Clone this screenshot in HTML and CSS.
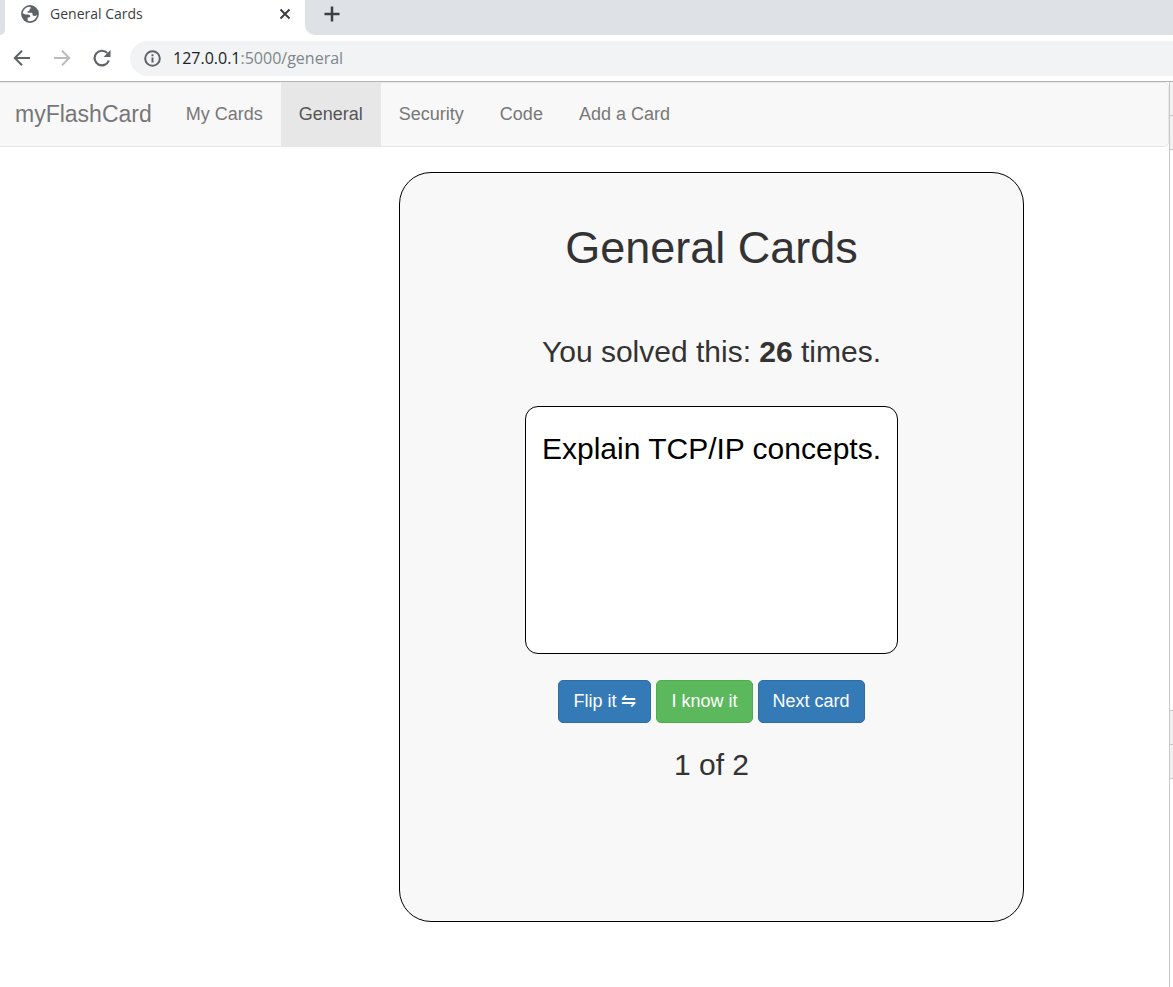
FILE: index.html
```html
<!DOCTYPE html>
<html lang="en">
<head>
<meta charset="utf-8">
<title>General Cards</title>
<link rel="stylesheet" href="styles.css">
</head>
<body>
<header class="browser">
  <div class="tabstrip">
    <div class="tab-edge"></div>
    <div class="tab">
      <svg class="globe" width="18" height="18" viewBox="0 0 18 18" aria-hidden="true"><circle cx="9" cy="9" r="8.9" fill="#5f6368"/><path d="M8.5 1.8C5 2 2.2 4.700 1.800 8.200L4.200 9.500H7.200C8.600 9.500 9.200 10.300 9.200 11.200C9.200 12 8.700 12.400 8 12.400H6.700V15.800C10.700 17.200 15.500 14.400 16.100 10L14.200 10.900C12.700 11.400 11.200 10.400 11.500 9C11.800 8 10.700 7.800 9.500 7.800H7.200C6.300 7.800 6.100 6.800 7 6.300L8.600 5.500V4.400C8.600 3.600 9.400 3.400 10.600 3.300Z" fill="#fff"/></svg>
      <span class="tab-title">General Cards</span>
      <button class="icon-button" aria-label="Close tab"><svg width="12" height="12" viewBox="0 0 12 12"><path d="M1.500 1.500l9 9M10.500 1.500l-9 9" stroke="#3c4043" stroke-width="2"/></svg></button>
    </div>
    <div class="tabstrip-rest">
      <button class="icon-button" aria-label="New tab"><svg width="16" height="16" viewBox="0 0 16 16"><path d="M8 .5v15M.5 8h15" stroke="#3c4043" stroke-width="2.500"/></svg></button>
    </div>
  </div>
  <div class="toolbar">
    <button class="icon-button" aria-label="Back"><svg width="18" height="18" viewBox="0 0 18 18"><path d="M17 9H2M9 1.800L1.800 9L9 16.200" fill="none" stroke="#5f6368" stroke-width="2"/></svg></button>
    <button class="icon-button" aria-label="Forward"><svg width="18" height="18" viewBox="0 0 18 18"><path d="M1 9h15M9 1.800L16.200 9L9 16.200" fill="none" stroke="#babcbe" stroke-width="2"/></svg></button>
    <button class="icon-button" aria-label="Reload"><svg width="18" height="18" viewBox="0 0 18 18"><path d="M15.800 11.500A7.300 7.300 0 1 1 14.200 4" fill="none" stroke="#5f6368" stroke-width="2.200"/><path d="M17.500 1v7h-7z" fill="#5f6368"/></svg></button>
    <div class="address">
      <svg width="17" height="17" viewBox="0 0 17 17" aria-hidden="true"><circle cx="8.500" cy="8.500" r="7.300" fill="none" stroke="#5f6368" stroke-width="2"/><path d="M8.500 7.500v5M8.500 4.200v2" stroke="#5f6368" stroke-width="2"/></svg>
      <span class="url"><span class="host">127.0.0.1</span>:5000/general</span>
    </div>
  </div>
</header>
<div class="viewport">
  <div class="page">
    <nav class="navbar">
      <a class="brand" href="#">myFlashCard</a>
      <a class="nav-link" href="#">My Cards</a>
      <a class="nav-link active" href="#">General</a>
      <a class="nav-link" href="#">Security</a>
      <a class="nav-link" href="#">Code</a>
      <a class="nav-link" href="#">Add a Card</a>
    </nav>
    <main class="panel">
      <h1 class="title">General Cards</h1>
      <p class="solved">You solved this: <b>26</b> times.</p>
      <div class="flashcard">Explain TCP/IP concepts.</div>
      <div class="actions">
        <button class="btn">Flip it <span class="flip">⇋</span></button>
        <button class="btn success">I know it</button>
        <button class="btn">Next card</button>
      </div>
      <p class="counter">1 of 2</p>
    </main>
  </div>
  <div class="scroll-edge">
    <div class="edge-cell"></div>
    <div class="edge-cell"></div>
    <div class="edge-track"></div>
    <div class="edge-cell"></div>
    <div class="edge-cell"></div>
    <div class="edge-rest"></div>
  </div>
</div>
</body>
</html>
```
FILE: styles.css
```css
* { box-sizing: border-box; }
body {
  margin: 0;
  min-height: 100vh;
  display: flex;
  flex-direction: column;
  background: #fff;
  color: #333;
  font-family: "Liberation Sans", Arial, sans-serif;
}
.browser { font-family: "Open Sans", sans-serif; border-bottom: 1px solid #b4b4b4; }
.tabstrip { display: flex; height: 35px; background: #fff; }
.tab-edge { width: 5px; background: #dee1e6; border-bottom-right-radius: 10px; }
.tab { display: flex; align-items: center; width: 300px; padding: 0 14px 7px 16px; gap: 11px; }
.tab-title { flex: 1; font-size: 14px; line-height: 20px; color: #3c4043; }
.tabstrip-rest { flex: 1; display: flex; align-items: center; padding: 0 0 7px 19px; background: #dee1e6; border-bottom-left-radius: 10px; }
.icon-button { display: flex; padding: 0; border: 0; background: none; }
.toolbar { display: flex; align-items: center; gap: 22px; height: 46px; padding-left: 13px; }
.address {
  flex: 1;
  display: flex;
  align-items: center;
  gap: 12px;
  height: 35px;
  margin-left: -3px;
  padding-left: 14px;
  border-radius: 18px 0 0 18px;
  background: #f1f3f4;
}
.url { font-size: 16px; line-height: 24px; color: #80868b; }
.host { color: #202124; }
.viewport { flex: 1; display: flex; }
.page { flex: 1; }
.navbar {
  display: flex;
  height: 65px;
  background: #f8f8f8;
  border: solid #e7e7e7;
  border-width: 1px 1px 1px 0;
  border-radius: 0 5px 5px 0;
}
.brand, .nav-link { display: flex; align-items: center; color: #777; text-decoration: none; }
.brand { padding: 0 16px 0 15px; font-size: 23px; }
.nav-link { padding: 0 18px; font-size: 18px; }
.active { background: #e7e7e7; color: #555; }
.panel {
  display: flex;
  flex-direction: column;
  align-items: center;
  width: 625px;
  min-height: 750px;
  margin: 25px 0 25px 399px;
  padding-top: 50px;
  border: 1px solid #000;
  border-radius: 32px;
  background: #f8f8f8;
}
.title { margin: 0; font-size: 45px; line-height: 50px; font-weight: 400; }
.solved { margin: 58px 0 0; font-size: 30px; line-height: 42px; }
.flashcard {
  min-width: 373px;
  min-height: 248px;
  margin-top: 33px;
  padding: 21px 16px;
  border: 1px solid #000;
  border-radius: 13px;
  background: #fff;
  color: #000;
  font-size: 30px;
  line-height: 42px;
}
.actions { display: flex; gap: 5px; margin-top: 26px; }
.btn {
  height: 43px;
  padding: 0 14px;
  border: 1px solid #2e6da4;
  border-radius: 5px;
  background: #337ab7;
  color: #fff;
  font: 18px/25px "Liberation Sans", Arial, sans-serif;
}
.success { background: #5cb85c; border-color: #4cae4c; }
.flip { font-family: "DejaVu Sans", sans-serif; font-size: 18px; font-weight: 200; line-height: 18px; }
.counter { margin: 21px 0 0; font-size: 30px; line-height: 42px; }
.scroll-edge { display: flex; flex-direction: column; width: 4px; border-left: 1px solid #c8c8c8; }
.edge-cell { height: 34px; background: #f1f1f1; border-bottom: 1px solid #c8c8c8; }
.edge-track { height: 561px; border-bottom: 1px solid #c8c8c8; }
.edge-rest { flex: 1; }
```
